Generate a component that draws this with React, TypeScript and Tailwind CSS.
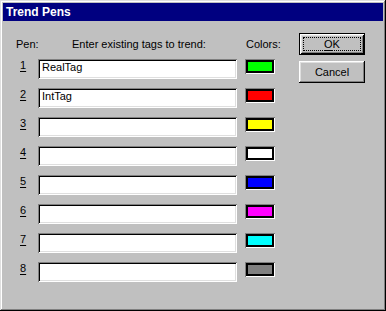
import React from "react";

const pens = [
  { tag: "RealTag", color: "bg-[#00ff00]" },
  { tag: "IntTag", color: "bg-[#ff0000]" },
  { tag: "", color: "bg-[#ffff00]" },
  { tag: "", color: "bg-[#ffffff]" },
  { tag: "", color: "bg-[#0000ff]" },
  { tag: "", color: "bg-[#ff00ff]" },
  { tag: "", color: "bg-[#00ffff]" },
  { tag: "", color: "bg-[#808080]" },
];

export default function App() {
  return (
    <div
      className="w-[386px] h-[311px] bg-[#c0c0c0] p-[3px] text-black text-[11px] leading-[13px] shadow-[inset_-1px_-1px_#000,inset_1px_1px_#dfdfdf,inset_-2px_-2px_#808080,inset_2px_2px_#fff]"
      style={{ fontFamily: '"Liberation Sans", Arial, sans-serif' }}
    >
      {/* Title bar */}
      <div className="h-[18px] bg-[#000080] flex items-center pl-[3px]">
        <span className="text-white font-bold text-[12px] leading-[14px]">Trend Pens</span>
      </div>

      <div className="flex pl-[13px]">
        {/* Pens */}
        <div className="w-[283px] pt-[17px]">
          <div className="flex h-[13px]">
            <span className="w-[56px]">Pen:</span>
            <span className="w-[174px]">Enter existing tags to trend:</span>
            <span>Colors:</span>
          </div>

          <div className="mt-[8px] pl-[4px] flex flex-col gap-[9px]">
            {pens.map((p, i) => (
              <div key={i} className="flex h-[20px] items-start">
                <span className="w-[18px]">
                  <u className="underline-offset-[2px]">{i + 1}</u>
                </span>
                <div className="w-[199px] h-[20px] bg-white px-[4px] pt-[2px] shadow-[inset_1px_1px_#808080,inset_-1px_-1px_#fff,inset_2px_2px_#000,inset_-2px_-2px_#dfdfdf]">
                  {p.tag}
                </div>
                <div className="ml-[8px] w-[30px] h-[15px] p-[1px] shadow-[inset_1px_1px_#808080,inset_-1px_-1px_#fff]">
                  <div className={`w-full h-full border-2 border-black ${p.color}`} />
                </div>
              </div>
            ))}
          </div>
        </div>

        {/* Buttons */}
        <div className="w-[66px] pt-[12px] flex flex-col gap-[6px]">
          <button className="h-[22px] border border-black p-[3px] bg-[#c0c0c0] shadow-[inset_1px_1px_#fff,inset_-1px_-1px_#000,inset_2px_2px_#dfdfdf,inset_-2px_-2px_#808080]">
            <div className="h-full border border-dotted border-black flex items-center justify-center">
              <span>
                <u className="underline-offset-[2px]">O</u>K
              </span>
            </div>
          </button>
          <button className="h-[22px] bg-[#c0c0c0] flex items-center justify-center shadow-[inset_-1px_-1px_#000,inset_1px_1px_#fff,inset_-2px_-2px_#808080,inset_2px_2px_#dfdfdf]">
            Cancel
          </button>
        </div>
      </div>
    </div>
  );
}
